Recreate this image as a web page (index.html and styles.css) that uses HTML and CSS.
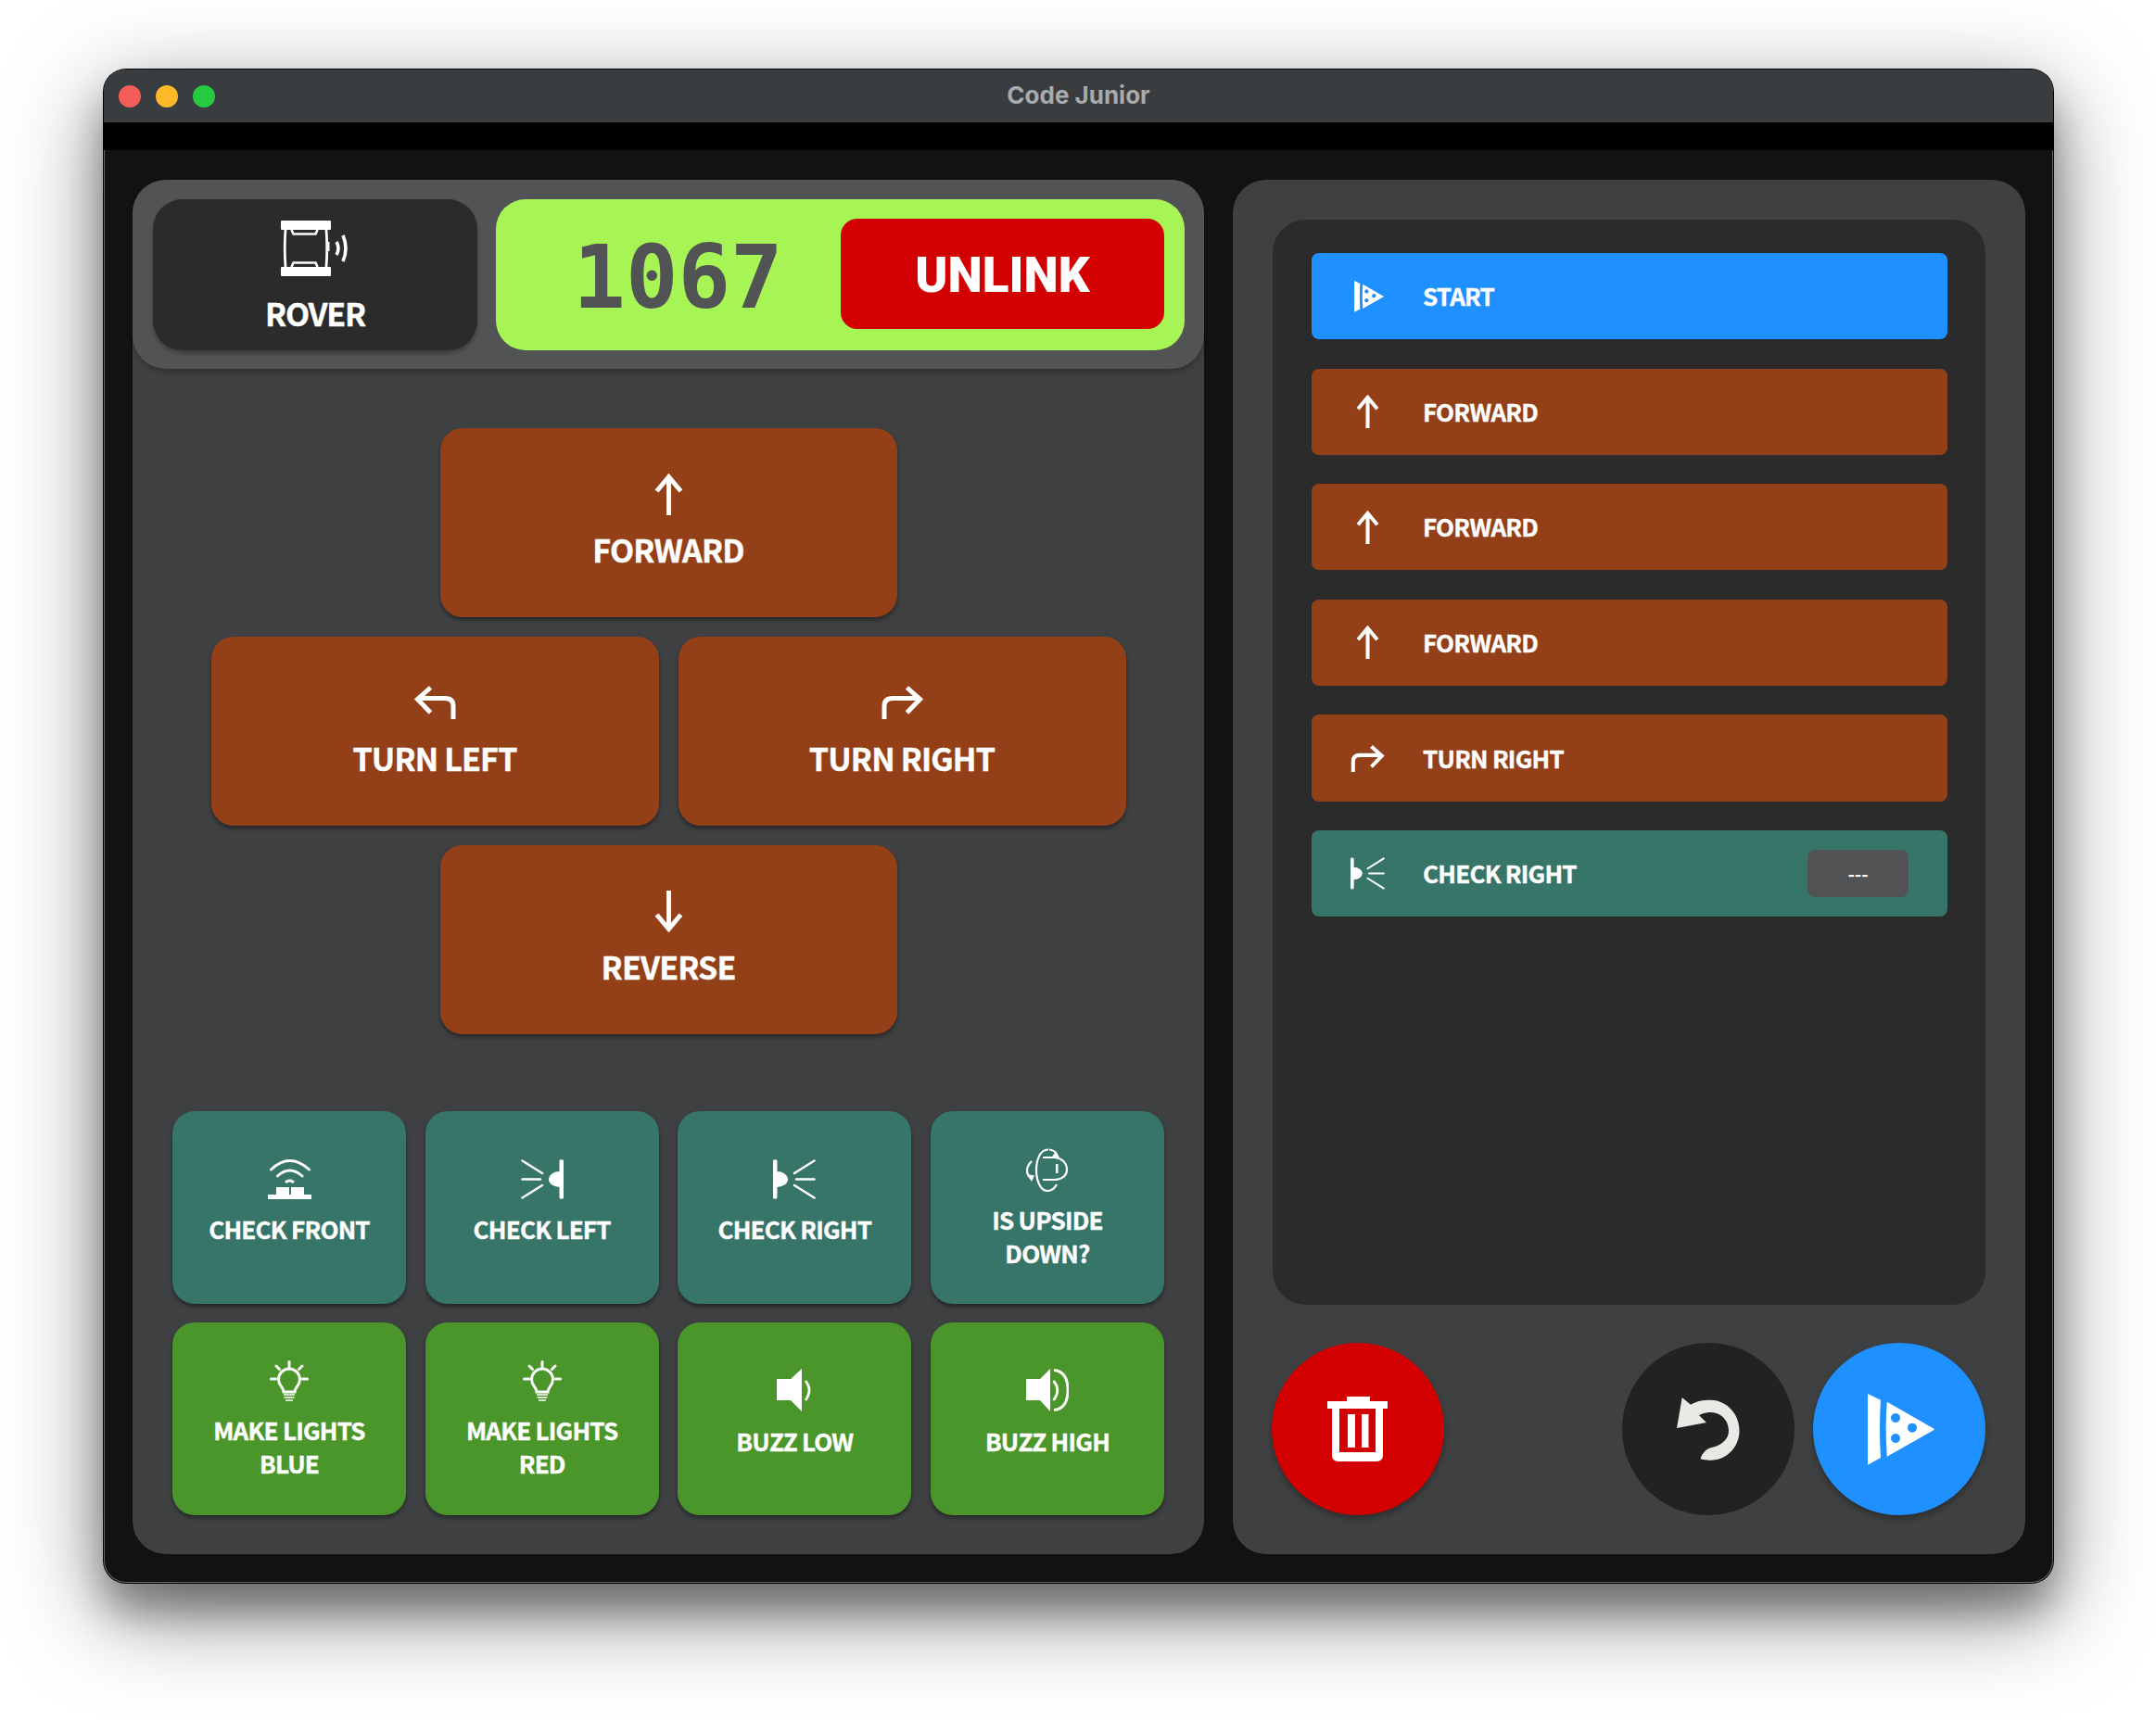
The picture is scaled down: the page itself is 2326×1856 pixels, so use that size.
FILE: index.html
```html
<!DOCTYPE html>
<html lang="en">
<head>
<meta charset="utf-8">
<title>Code Junior</title>
<link rel="stylesheet" href="styles.css">
</head>
<body>
<svg class="sprite" xmlns="http://www.w3.org/2000/svg">
  <symbol id="i-up" viewBox="0 0 31 45"><path d="M15.5 45V4M2.5 19L15.5 3.5L28.5 19" fill="none" stroke="currentColor" stroke-width="5"/></symbol>
  <symbol id="i-down" viewBox="0 0 31 45"><path d="M15.5 0V41M2.5 26L15.5 41.500L28.500 26" fill="none" stroke="currentColor" stroke-width="5"/></symbol>
  <symbol id="i-right" viewBox="0 0 45 36"><path d="M3 36V22Q3 13.500 12 13.500H41M27.500 2L41.500 14.500L27.500 29" fill="none" stroke="currentColor" stroke-width="5"/></symbol>
  <symbol id="i-left" viewBox="0 0 45 36"><path d="M42 36V22Q42 13.500 33 13.500H4M17.500 2L3.500 14.500L17.500 29" fill="none" stroke="currentColor" stroke-width="5"/></symbol>
  <symbol id="i-rover" viewBox="0 0 74 60">
    <path fill="currentColor" d="M1 0H53a1 1 0 0 1 1 1V9a1 1 0 0 1-1 1H1a1 1 0 0 1-1-1V1a1 1 0 0 1 1-1ZM1 50H53a1 1 0 0 1 1 1V59a1 1 0 0 1-1 1H1a1 1 0 0 1-1-1V51a1 1 0 0 1 1-1Z"/>
    <path fill="none" stroke="currentColor" stroke-width="2.800" d="M5 10Q3.500 30 5 50M49 10Q50.500 30 49 50"/>
    <path fill="none" stroke="currentColor" stroke-width="2.600" d="M11.500 10L13.500 14.500H37.500L39.500 10M11.500 50L13.500 45.500H37.500L39.500 50"/>
    <path fill="currentColor" d="M49 23h3.500v10h-3.500z"/>
    <path fill="none" stroke="currentColor" stroke-width="3.600" d="M60 23Q64 30 60 37M67 16Q73 30 67 44"/>
  </symbol>
  <symbol id="i-front" viewBox="0 0 47 44">
    <path fill="none" stroke="currentColor" stroke-width="3" stroke-linecap="round" d="M3.500 12Q23.500-7 44.500 12M10.500 19Q23.500 7 37 19"/>
    <path fill="none" stroke="currentColor" stroke-width="3" d="M19 26Q23.500 22 28 26"/>
    <path fill="currentColor" d="M9 31h14v8H9zM25 31h14v8H25zM0 39h47v5H0z"/>
  </symbol>
  <symbol id="i-check-left" viewBox="0 0 46 43">
    <path fill="currentColor" d="M41.500 1.500a2.300 1.500 0 0 1 4.500 0v40a2.300 1.500 0 0 1-4.500 0ZM42 13V30a12 8.500 0 0 1 0-17Z"/>
    <path fill="none" stroke="currentColor" stroke-width="2.500" stroke-linecap="round" d="M1.500 1.500L23 15M1.500 21.500H21M1.500 41.500L23 28"/>
  </symbol>
  <symbol id="i-check-right" viewBox="0 0 46 43">
    <path fill="currentColor" d="M4.500 1.500a2.300 1.500 0 0 0-4.500 0v40a2.300 1.500 0 0 0 4.500 0ZM4 13V30a12 8.500 0 0 0 0-17Z"/>
    <path fill="none" stroke="currentColor" stroke-width="2.500" stroke-linecap="round" d="M44.500 1.500L23 15M44.500 21.500H25M44.500 41.500L23 28"/>
  </symbol>
  <symbol id="i-flip" viewBox="0 0 45 47">
    <path fill="none" stroke="currentColor" stroke-width="2.200" d="M24 1.500C15 1 11 13 11 23.500S15 46 23 46C27 46 31 43 33 39M25 1.500C29 2 32 4 33 7"/>
    <path fill="none" stroke="currentColor" stroke-width="2.200" d="M6 14C3 17 1 20 1 24C1 29 3 31 6 33M18 10H31C39 11 44 16 44 23C44 30 38 34 30 34H18"/>
    <path fill="currentColor" d="M32 3L36 10L28 9.500ZM6 36L1 28L9 29.500ZM32 17h2.500v10H32z"/>
  </symbol>
  <symbol id="i-bulb" viewBox="0 0 42 45">
    <path fill="none" stroke="currentColor" stroke-width="3" d="M15 34C15 29 9.500 27.500 9.500 20.500a11.500 11.500 0 0 1 23 0C32.500 27.500 27 29 27 34Z"/>
    <path fill="none" stroke="currentColor" stroke-width="1.700" d="M15 37H27M15.500 40H26.500M17 43H25"/>
    <path fill="none" stroke="currentColor" stroke-width="3" stroke-linecap="round" d="M21 1.500V6.500M7 6L10.500 9.500M35 6L31.500 9.500M1.500 20H6.500M35.500 20H40.500"/>
  </symbol>
  <symbol id="i-buzz-low" viewBox="0 0 39 46">
    <path fill="currentColor" d="M0 11H15L27 0V46L15 34H0Z"/>
    <path fill="none" stroke="currentColor" stroke-width="2.800" d="M31 13Q39 23 31 34"/>
  </symbol>
  <symbol id="i-buzz-high" viewBox="0 0 46 46">
    <path fill="currentColor" d="M0 11H15L26 0V46L15 34H0Z"/>
    <path fill="none" stroke="currentColor" stroke-width="2.800" d="M29.500 13Q38 23 29.500 34M30 1.500Q45 3 45 23T30 44.500"/>
  </symbol>
  <symbol id="i-play" viewBox="0 0 72 77">
    <path fill="currentColor" fill-rule="evenodd" d="M0 0L14 6.700Q12 38 14 69L0 76.700ZM20.800 8.700L71.500 37.700Q72 38.500 71.500 39L20.800 67.700Q18.500 38 20.800 8.700ZM30 21a5 5 0 1 0 .01 0ZM48 31.700a5 5 0 1 0 .01 0ZM30 43a5 5 0 1 0 .01 0Z"/>
  </symbol>
  <symbol id="i-trash" viewBox="0 0 65 70">
    <path fill="currentColor" fill-rule="evenodd" d="M21 0H46V5H65V13H60V63Q60 70 53 70H12Q5 70 5 63V13H0V5H21ZM13 13V60H52V13ZM22 19H30V55H22ZM37 19H44.500V55H37Z"/>
  </symbol>
  <symbol id="i-undo" viewBox="0 0 70 68">
    <path fill="currentColor" d="M6.700 0L1 33L33 27L25 19.300C30 16.500 34 16 37.600 16C48 16 57 24 57 36C57 46 48 52 37.600 54.300C32 56 29 60 26.400 66C28 67 33 67.700 37.600 67.700C55 67.700 68.500 53 68.500 36C68.500 17 54 2.700 37.600 2.700C29 2.700 22 4 16 7.700Z"/>
  </symbol>
</svg>

<div class="window">
  <div class="titlebar">
    <div class="lights">
      <span class="light light-red"></span>
      <span class="light light-yellow"></span>
      <span class="light light-green"></span>
    </div>
    <div class="title">Code Junior</div>
  </div>
  <div class="strip"></div>
  <div class="content">
    <section class="panel panel-left">
      <header class="head">
        <div class="device">
          <svg class="ic-rover"><use href="#i-rover"/></svg>
          <span class="device-name">ROVER</span>
        </div>
        <div class="link">
          <span class="code">1067</span>
          <button class="unlink">UNLINK</button>
        </div>
      </header>
      <div class="dpad">
        <div class="dpad-row">
          <button class="move move-wide"><svg class="ic-arrow"><use href="#i-up"/></svg><span>FORWARD</span></button>
        </div>
        <div class="dpad-row">
          <button class="move move-turn"><svg class="ic-turn"><use href="#i-left"/></svg><span>TURN LEFT</span></button>
          <button class="move move-turn"><svg class="ic-turn"><use href="#i-right"/></svg><span>TURN RIGHT</span></button>
        </div>
        <div class="dpad-row">
          <button class="move move-wide"><svg class="ic-arrow"><use href="#i-down"/></svg><span>REVERSE</span></button>
        </div>
      </div>
      <div class="cards">
        <button class="card teal"><svg class="ic-front"><use href="#i-front"/></svg><span>CHECK FRONT</span></button>
        <button class="card teal"><svg class="ic-check"><use href="#i-check-left"/></svg><span>CHECK LEFT</span></button>
        <button class="card teal"><svg class="ic-check"><use href="#i-check-right"/></svg><span>CHECK RIGHT</span></button>
        <button class="card teal two"><svg class="ic-flip"><use href="#i-flip"/></svg><span>IS UPSIDE<br>DOWN?</span></button>
        <button class="card green two"><svg class="ic-bulb"><use href="#i-bulb"/></svg><span>MAKE LIGHTS<br>BLUE</span></button>
        <button class="card green two"><svg class="ic-bulb"><use href="#i-bulb"/></svg><span>MAKE LIGHTS<br>RED</span></button>
        <button class="card green"><svg class="ic-low"><use href="#i-buzz-low"/></svg><span>BUZZ LOW</span></button>
        <button class="card green"><svg class="ic-high"><use href="#i-buzz-high"/></svg><span>BUZZ HIGH</span></button>
      </div>
    </section>
    <section class="panel panel-right">
      <div class="program">
        <div class="step step-start"><span class="step-icon"><svg class="ic-step-play"><use href="#i-play"/></svg></span><span class="step-label">START</span></div>
        <div class="step step-move"><span class="step-icon"><svg class="ic-step-up"><use href="#i-up"/></svg></span><span class="step-label">FORWARD</span></div>
        <div class="step step-move"><span class="step-icon"><svg class="ic-step-up"><use href="#i-up"/></svg></span><span class="step-label">FORWARD</span></div>
        <div class="step step-move"><span class="step-icon"><svg class="ic-step-up"><use href="#i-up"/></svg></span><span class="step-label">FORWARD</span></div>
        <div class="step step-move"><span class="step-icon"><svg class="ic-step-turn"><use href="#i-right"/></svg></span><span class="step-label">TURN RIGHT</span></div>
        <div class="step step-check"><span class="step-icon"><svg class="ic-step-check"><use href="#i-check-right"/></svg></span><span class="step-label">CHECK RIGHT</span><span class="value">---</span></div>
      </div>
      <div class="controls">
        <button class="round round-red"><svg class="ic-trash"><use href="#i-trash"/></svg></button>
        <div class="controls-right">
          <button class="round round-dark"><svg class="ic-undo"><use href="#i-undo"/></svg></button>
          <button class="round round-blue"><svg class="ic-play"><use href="#i-play"/></svg></button>
        </div>
      </div>
    </section>
  </div>
</div>
</body>
</html>
```

FILE: styles.css
```css
* { box-sizing: border-box; }
html, body { margin: 0; height: 100%; }
body {
  background: #fff;
  padding: 75px 111px 0 112px;
  overflow: hidden;
  font-family: "Noto Sans CJK SC", "Noto Sans", sans-serif;
  color: #fff;
}
.sprite { display: none; }
button {
  font: inherit;
  color: inherit;
  border: 0;
  padding: 0;
  cursor: pointer;
}
svg { display: block; flex: none; }

.window {
  width: 2103px;
  height: 1633px;
  border-radius: 24px;
  overflow: hidden;
  background: #121212;
  display: flex;
  flex-direction: column;
  box-shadow: inset 0 0 0 1px #666, 0 0 0 1px #000, 0 30px 40px rgba(0, 0, 0, .3), 0 30px 100px rgba(0, 0, 0, .5);
}
.titlebar {
  height: 57px;
  flex: none;
  background: #3a3d40;
  display: flex;
  align-items: center;
  padding-left: 16px;
}
.lights { display: flex; gap: 16px; width: 104px; }
.light { width: 24px; height: 24px; border-radius: 50%; }
.light-red { background: #f45d58; }
.light-yellow { background: #feb928; }
.light-green { background: #27c93f; }
.title {
  flex: 1;
  text-align: center;
  padding-right: 120px;
  padding-bottom: 2px;
  font-family: Inter, "Liberation Sans", sans-serif;
  font-weight: 700;
  font-size: 26px;
  color: #a9aaaa;
}
.strip { height: 30px; flex: none; background: #000; }
.content {
  flex: 1;
  min-height: 0;
  display: flex;
  gap: 31px;
  padding: 32px 30px 31px 31px;
}
.panel {
  background: #3f4042;
  border-radius: 36px;
}
.panel-left { width: 1156px; display: flex; flex-direction: column; }
.panel-right {
  flex: 1;
  display: flex;
  flex-direction: column;
  padding: 43px 43px 42px;
  gap: 41px;
}

.head {
  height: 204px;
  flex: none;
  background: #525355;
  border-radius: 36px;
  padding: 21px 21px 20px 22px;
  display: flex;
  gap: 20px;
  box-shadow: 0 4px 4px rgba(0, 0, 0, .2);
}
.device {
  width: 350px;
  background: #2b2b2b;
  border-radius: 32px;
  display: flex;
  flex-direction: column;
  align-items: center;
  box-shadow: 0 4px 4px rgba(0, 0, 0, .25);
  padding-top: 23px;
}
.ic-rover { width: 74px; height: 60px; }
.device-name {
  font-size: 34px;
  font-weight: 700;
  line-height: 46px;
  margin-top: 17px;
  letter-spacing: -.035em;
  -webkit-text-stroke: .4px #fff;
}
.link {
  flex: 1;
  background: #a6f555;
  border-radius: 32px;
  display: flex;
  align-items: center;
  padding-right: 22px;
}
.code {
  flex: 1;
  text-align: center;
  padding-left: 21px;
  padding-top: 5px;
  font-family: "DejaVu Sans Mono", monospace;
  font-weight: 700;
  font-size: 94px;
  color: #525355;
}
.unlink {
  width: 349px;
  height: 119px;
  margin-bottom: 2px;
  padding-top: 2px;
  background: #d20000;
  border-radius: 18px;
  font-family: Roboto, "Liberation Sans", sans-serif;
  font-weight: 900;
  font-size: 53px;
}

.dpad {
  margin-top: 64px;
  display: flex;
  flex-direction: column;
  gap: 21px;
}
.dpad-row { display: flex; justify-content: center; gap: 21px; }
.move {
  width: 483px;
  height: 204px;
  background: #934018;
  border-radius: 24px;
  box-shadow: 0 3px 4px rgba(0, 0, 0, .4);
  display: flex;
  flex-direction: column;
  align-items: center;
  justify-content: center;
  font-size: 34px;
  font-weight: 700;
  line-height: 50px;
  letter-spacing: -.025em;
  -webkit-text-stroke: .4px #fff;
}
.move-wide { width: 493px; }
.move-turn { padding-top: 4px; }
.ic-arrow { width: 31px; height: 45px; margin-bottom: 12px; }
.ic-turn { width: 45px; height: 36px; margin-bottom: 17px; }

.cards {
  margin-top: 83px;
  padding: 0 43px;
  display: grid;
  grid-template-columns: repeat(4, 1fr);
  grid-auto-rows: 208px;
  gap: 20px 20.670px;
}
.card {
  border-radius: 24px;
  box-shadow: 0 3px 4px rgba(0, 0, 0, .4);
  display: flex;
  flex-direction: column;
  align-items: center;
  justify-content: center;
  font-size: 26px;
  font-weight: 700;
  line-height: 36px;
  letter-spacing: -.03em;
  -webkit-text-stroke: .4px #fff;
  text-align: center;
  padding-bottom: 12px;
}
.card.two { padding: 2px 0 0; }
.teal { background: #377568; }
.green { background: #4a962a; }
.card svg { margin-bottom: 14px; }
.card.two svg { margin-bottom: 12px; }
.ic-front { width: 47px; height: 44px; }
.ic-check { width: 46px; height: 43px; }
.ic-flip { width: 45px; height: 47px; }
.ic-bulb { width: 42px; height: 45px; }
.ic-low { width: 39px; height: 46px; }
.ic-high { width: 46px; height: 46px; }

.program {
  flex: 1;
  background: #2b2b2b;
  border-radius: 36px;
  padding: 36px 41px 36px 42px;
  display: flex;
  flex-direction: column;
  gap: 31.300px;
}
.step {
  height: 93.300px;
  flex: none;
  border-radius: 8px;
  display: flex;
  align-items: center;
  font-size: 26px;
  font-weight: 700;
  letter-spacing: -.03em;
  padding-right: 42px;
}
.step-label { padding-bottom: 2px; -webkit-text-stroke: .4px #fff; }
.step-icon {
  width: 120px;
  padding-left: 42px;
  flex: none;
  display: flex;
  justify-content: flex-start;
}
.step-start { background: #1e90ff; }
.step-move { background: #934018; }
.step-check { background: #377568; }
.ic-step-play { width: 32px; height: 34px; margin-left: 4px; }
.ic-step-up { width: 25px; height: 36px; margin-left: 6px; }
.ic-step-turn { width: 37px; height: 29px; }
.ic-step-check { width: 37px; height: 35px; }
.value {
  margin-left: auto;
  width: 109px;
  height: 51px;
  background: #525355;
  border-radius: 8px;
  display: flex;
  align-items: center;
  justify-content: center;
  font-size: 20px;
  font-weight: 700;
  letter-spacing: 0;
}

.controls { display: flex; justify-content: space-between; flex: none; }
.controls-right { display: flex; gap: 20px; }
.round {
  width: 186px;
  height: 186px;
  border-radius: 50%;
  display: flex;
  align-items: center;
  justify-content: center;
  box-shadow: 0 4px 6px rgba(0, 0, 0, .3);
}
.round-red { background: #d20000; margin-left: -1px; padding-right: 2px; }
.round-dark { background: #222; color: #e8e8e4; box-shadow: none; }
.round-blue { background: #1e90ff; }
.ic-trash { width: 65px; height: 70px; }
.ic-undo { width: 70px; height: 68px; }
.ic-play { width: 72px; height: 77px; margin-left: 4px; }
```
